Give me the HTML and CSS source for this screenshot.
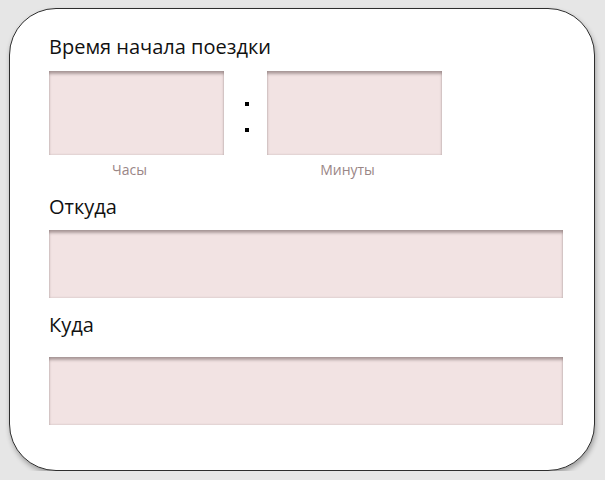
FILE: index.html
```html
<!DOCTYPE html>
<html lang="ru">
<head>
<meta charset="utf-8">
<link rel="stylesheet" href="styles.css">
</head>
<body>
<div class="card">
  <h2 class="title">Время начала поездки</h2>
  <div class="time-row">
    <div class="time-col">
      <div class="field field-time"></div>
      <div class="hint">Часы</div>
    </div>
    <div class="colon"><span class="dot"></span><span class="dot"></span></div>
    <div class="time-col">
      <div class="field field-time"></div>
      <div class="hint">Минуты</div>
    </div>
  </div>
  <h2 class="title title-from">Откуда</h2>
  <div class="field field-wide"></div>
  <h2 class="title title-to">Куда</h2>
  <div class="field field-wide field-to"></div>
</div>
</body>
</html>
```

FILE: styles.css
```css
html, body {
  margin: 0;
  padding: 0;
  background: #e6e6e6;
}
body {
  padding: 8px 10px 0 9px;
  font-family: "Open Sans", "Noto Sans", sans-serif;
}
.card {
  background: #fff;
  border: 1px solid #2e2e2e;
  border-radius: 47px;
  box-shadow: 1px 3px 5px rgba(0,0,0,0.3);
  padding: 24px 0 0 39px;
  box-sizing: border-box;
  width: 586px;
  height: 463px;
}
.title {
  margin: 0;
  font-size: 20px;
  line-height: 27px;
  font-weight: 400;
  color: #111;
}
.time-row {
  display: flex;
  margin-top: 11px;
}
.time-col {
  width: 175px;
  display: flex;
  flex-direction: column;
}
.field {
  background: #f2e3e3;
  box-shadow: inset 0 4px 3px -1px rgba(80,60,60,0.4), inset 1px 0 2px rgba(80,60,60,0.15), inset -1px 0 2px rgba(80,60,60,0.15);
}
.field-time {
  height: 84px;
}
.field-wide {
  width: 514px;
  height: 68px;
  margin-top: 10px;
}
.field-to {
  margin-top: 19px;
}
.hint {
  margin-top: 5px;
  font-size: 14px;
  line-height: 19px;
  color: #9a8686;
  text-align: center;
  padding-right: 14px;
}
.colon {
  width: 43px;
  height: 84px;
  display: flex;
  flex-direction: column;
  align-items: center;
  padding-top: 31px;
  padding-left: 2px;
  box-sizing: border-box;
  gap: 22px;
}
.dot {
  width: 4px;
  height: 4px;
  background: #000;
}
.title-from {
  margin-top: 14px;
}
.title-to {
  margin-top: 13px;
}
```
